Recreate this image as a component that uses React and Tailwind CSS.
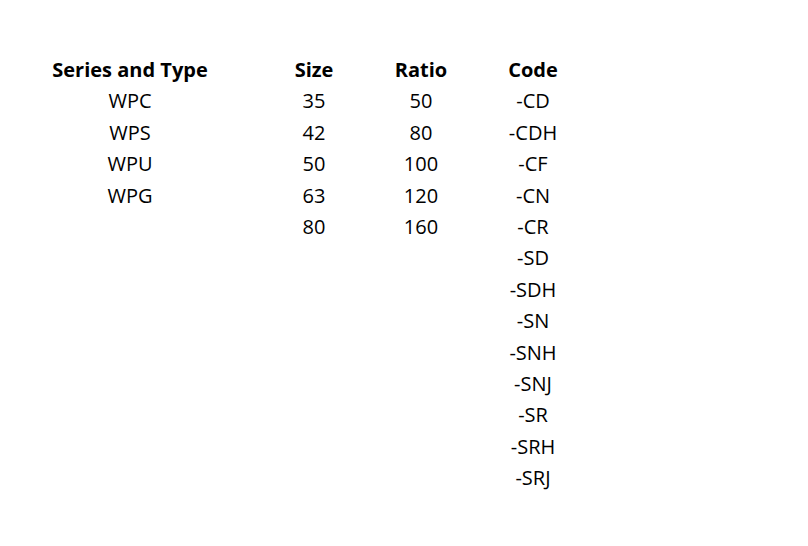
const series = ["WPC", "WPS", "WPU", "WPG"];
const sizes = ["35", "42", "50", "63", "80"];
const ratios = ["50", "80", "100", "120", "160"];
const codes = ["-CD", "-CDH", "-CF", "-CN", "-CR", "-SD", "-SDH", "-SN", "-SNH", "-SNJ", "-SR", "-SRH", "-SRJ"];

const Column = ({ title, items, width }) => (
  <div className={`flex flex-col items-center ${width}`}>
    <div className="font-bold">{title}</div>
    {items.map((item) => (
      <div key={item}>{item}</div>
    ))}
  </div>
);

export default function App() {
  return (
    <div
      className="w-[808px] h-[546px] bg-white text-black text-[20px] leading-[31.4px] pt-[54px] pl-[30px] flex"
      style={{ fontFamily: '"Open Sans", "Noto Sans", sans-serif' }}
    >
      <Column title="Series and Type" items={series} width="w-[200px] mr-[30px]" />
      <Column title="Size" items={sizes} width="w-[108px]" />
      <Column title="Ratio" items={ratios} width="w-[106px]" />
      <Column title="Code" items={codes} width="w-[118px]" />
    </div>
  );
}
